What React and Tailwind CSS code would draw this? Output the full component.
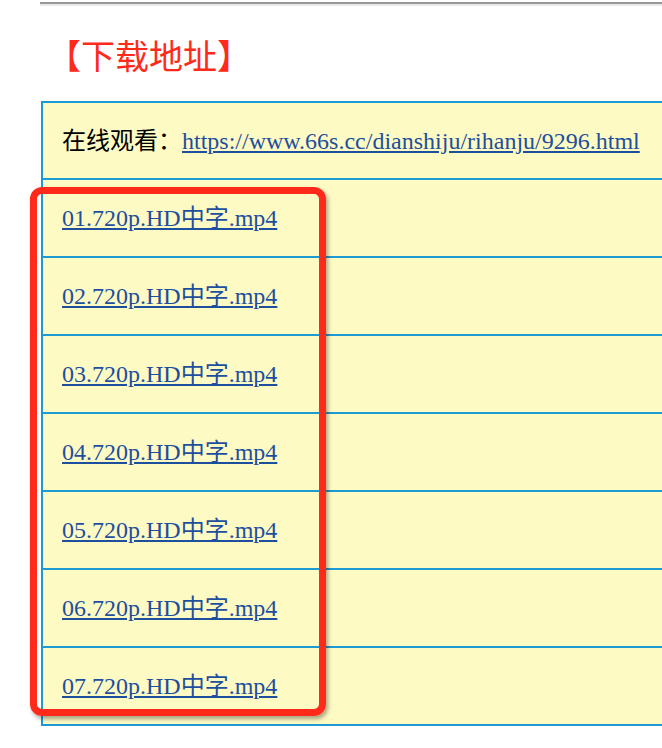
const rows = ['01', '02', '03', '04', '05', '06', '07'];

export default function App() {
    return (
        <div className="relative w-[662px] h-[748px] overflow-hidden bg-white font-['Liberation_Serif','Noto_Sans_CJK_SC',serif]">
            <div className="ml-[40px] mt-[2px] h-[2px] bg-[#999999]" />
            <div className="ml-[40px] h-[2px] bg-[#e8e8e8]" />

            <h2 className="ml-[47px] mt-[29px] h-[40px] text-[34px] leading-[40px] text-[#ff2a1a] font-['Noto_Sans_CJK_SC',serif] whitespace-nowrap">
                【下载地址】
            </h2>

            <div className="ml-[41px] mt-[26px] w-[700px] border-t-2 border-l-2 border-[#1b9bd1] bg-[#fefac4]">
                <div className="flex h-[77px] items-center border-b-2 border-[#1b9bd1] pl-[19px] text-[24px]">
                    <span className="text-black">在线观看：</span>
                    <a href="#" className="text-[#1d4f9e] underline">
                        https://www.66s.cc/dianshiju/rihanju/9296.html
                    </a>
                </div>
                {rows.map((n) => (
                    <div key={n} className="flex h-[78px] items-center border-b-2 border-[#1b9bd1] pl-[19px] text-[24px]">
                        <a href="#" className="text-[#1d4f9e] underline">
                            {n}.720p.HD中字.mp4
                        </a>
                    </div>
                ))}
            </div>

            <div className="absolute left-[30px] top-[187px] w-[296px] h-[529px] rounded-[12px] border-[7px] border-[#ff2a1a] shadow-[2px_3px_4px_rgba(0,0,0,0.35)]" />
        </div>
    );
}
